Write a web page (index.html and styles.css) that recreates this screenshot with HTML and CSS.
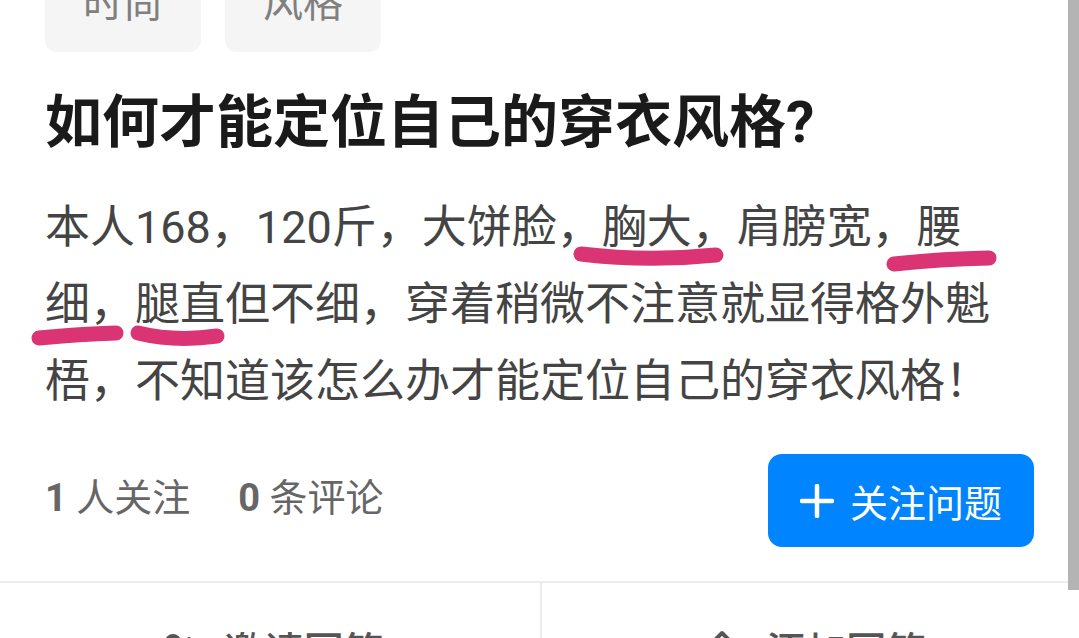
FILE: index.html
```html
<!DOCTYPE html>
<html lang="zh-CN">
<head>
<meta charset="utf-8">
<title>如何才能定位自己的穿衣风格?</title>
<link rel="stylesheet" href="styles.css">
</head>
<body>
<div class="page">
  <section class="question">
    <div class="tags">
      <span class="tag">时尚</span>
      <span class="tag">风格</span>
    </div>
    <h1 class="title">如何才能定位自己的穿衣风格?</h1>
    <p class="detail">本人168，120斤，大饼脸，胸大，肩膀宽，腰细，腿直但不细，穿着稍微不注意就显得格外魁梧，不知道该怎么办才能定位自己的穿衣风格！</p>
    <div class="meta">
      <div class="stats">
        <span class="stat"><b>1</b> 人关注</span>
        <span class="stat"><b>0</b> 条评论</span>
      </div>
      <button class="follow-btn" type="button">
        <svg class="plus" viewBox="0 0 34 34" width="34" height="34"><path d="M17 2V32M2 17H32" stroke="#fff" stroke-width="4.5" stroke-linecap="round" fill="none"/></svg>
        <span>关注问题</span>
      </button>
    </div>
  </section>
  <nav class="actions">
    <div class="action">
      <svg class="action-icon" viewBox="0 0 40 40" width="40" height="40"><circle cx="17" cy="13" r="8" fill="#555"/><path d="M3 38c0-8 6-13 14-13s14 5 14 13z" fill="#555"/><path d="M33 10v12M27 16h12" stroke="#555" stroke-width="4" stroke-linecap="round"/></svg>
      <span>邀请回答</span>
    </div>
    <div class="action">
      <svg class="action-icon" viewBox="0 0 44 40" width="44" height="40"><path d="M4 36L8 24L28 4L38 14L18 34Z" fill="none" stroke="#555" stroke-width="4" stroke-linejoin="round"/><path d="M24 36H42" stroke="#555" stroke-width="4" stroke-linecap="round"/></svg>
      <span>添加回答</span>
    </div>
  </nav>
  <svg class="marks" viewBox="0 0 1079 638" width="1079" height="638">
    <g fill="none" stroke="#db3474" stroke-width="15" stroke-linecap="round">
      <path d="M581 254 Q648 262 716 255"/>
      <path d="M894 264 Q940 259 989 258"/>
      <path d="M39 338 Q80 334 116 333"/>
      <path d="M138 333 Q175 342 217 336"/>
    </g>
  </svg>
  <div class="scrollbar"></div>
</div>
</body>
</html>
```

FILE: styles.css
```css
* { box-sizing: border-box; }

body {
  margin: 0;
  background: #ffffff;
  font-family: Roboto, "Noto Sans CJK SC", sans-serif;
  overflow: hidden;
}

.page {
  position: relative;
  width: 1079px;
  height: 638px;
  overflow: hidden;
  background: #ffffff;
}

.question {
  padding: 0 45px;
}

.tags {
  display: flex;
  gap: 24px;
  margin-top: -44px;
}

.tag {
  height: 96px;
  line-height: 96px;
  padding: 0 38px;
  background: #f5f5f5;
  border-radius: 12px;
  font-size: 40px;
  color: #808080;
}

.title {
  margin: 31px 0 0;
  font-size: 57px;
  line-height: 80px;
  font-weight: 700;
  color: #1a1a1a;
}

.detail {
  margin: 26px 0 0;
  font-size: 45px;
  line-height: 77px;
  color: #444444;
}

.meta {
  display: flex;
  justify-content: space-between;
  align-items: center;
  margin-top: 34px;
}

.stats {
  display: flex;
  gap: 48px;
  font-size: 38px;
  color: #666666;
  padding-bottom: 12px;
}

.stat b {
  font-weight: 700;
}

.follow-btn {
  width: 266px;
  height: 93px;
  padding: 0;
  border: none;
  border-radius: 14px;
  background: #0084ff;
  color: #ffffff;
  font-family: inherit;
  font-size: 38px;
  display: flex;
  align-items: center;
  justify-content: center;
  gap: 16px;
}

.plus {
  display: block;
}

.actions {
  margin-top: 34px;
  border-top: 2px solid #ececec;
  display: grid;
  grid-template-columns: 1fr 1fr;
  height: 134px;
}

.action {
  display: flex;
  align-items: center;
  justify-content: center;
  gap: 28px;
  font-size: 40px;
  font-weight: 500;
  color: #555555;
}

.action + .action {
  border-left: 2px solid #ececec;
}

.action-icon {
  display: block;
}

.marks {
  position: absolute;
  left: 0;
  top: 0;
  pointer-events: none;
}

.scrollbar {
  position: absolute;
  right: 0;
  top: 0;
  width: 11px;
  height: 590px;
  background: #b4b4b4;
}
```
